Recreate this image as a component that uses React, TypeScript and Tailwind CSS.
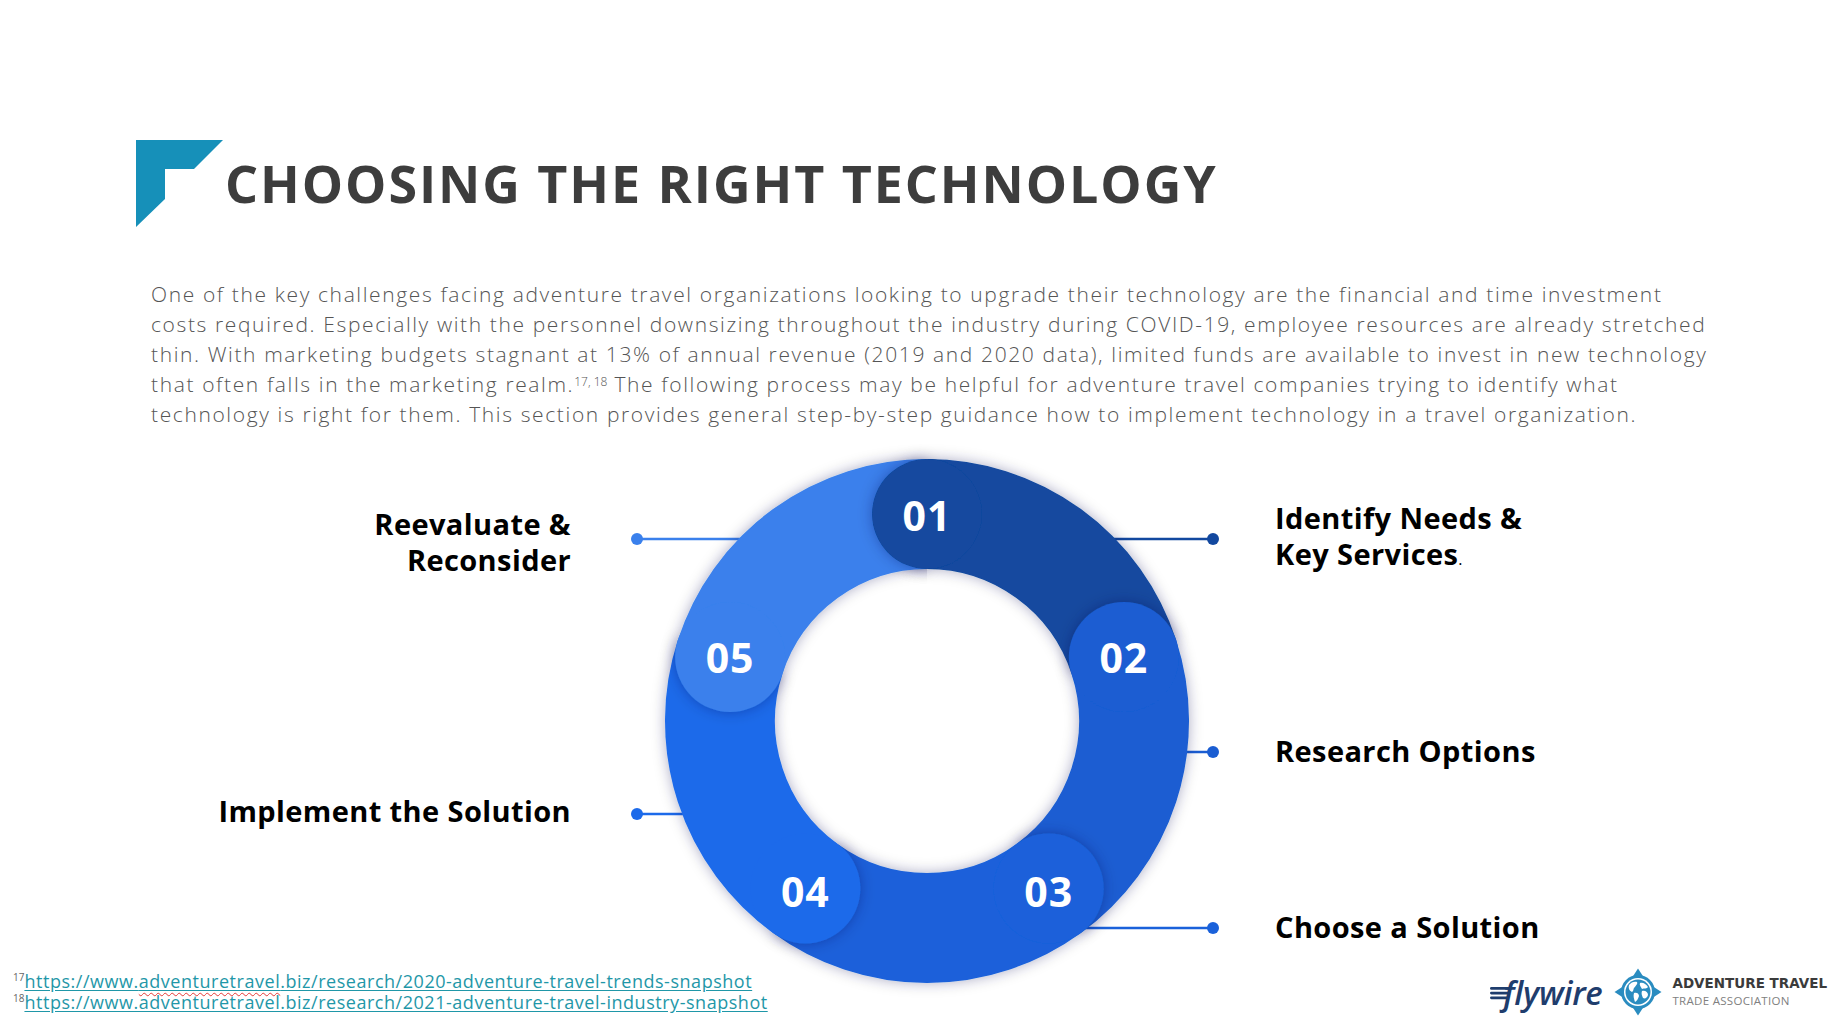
import React from "react";

const CX = 927;
const CY = 721;
const RM = 207;
const BW = 110;
const RO = RM + BW / 2;

const pt = (deg: number, r: number) => {
  const a = (deg * Math.PI) / 180;
  return [CX + r * Math.sin(a), CY - r * Math.cos(a)];
};

const arc = (a: number, b: number) => {
  const [x1, y1] = pt(a, RM);
  const [x2, y2] = pt(b, RM);
  return `M ${x1} ${y1} A ${RM} ${RM} 0 0 1 ${x2} ${y2}`;
};

const segments = [
  { n: "01", a: 0, color: "#12489f", dy: 17 },
  { n: "02", a: 72, color: "#1a5dd2", dy: 16 },
  { n: "03", a: 144, color: "#1a61da", dy: 19 },
  { n: "04", a: 216, color: "#1c6aea", dy: 19 },
  { n: "05", a: 288, color: "#3a80ec", dy: 16 },
];

const connectors = [
  { x1: 637, x2: 800, y: 539, color: "#3a80ec" },
  { x1: 637, x2: 760, y: 814, color: "#1c6aea" },
  { x1: 1050, x2: 1213, y: 539, color: "#12489f" },
  { x1: 1100, x2: 1213, y: 752, color: "#1a5dd2" },
  { x1: 980, x2: 1213, y: 928, color: "#1a61da" },
];

const FlagMark = () => (
  <svg width="87" height="87" viewBox="0 0 87 87" className="shrink-0">
    <polygon points="0,0 87,0 58,29 29,29 29,59 0,87" fill="#1690b9" />
  </svg>
);

const Ring = () => {
  const head = pt(0, RM);
  return (
    <svg width="630" height="540" viewBox="610 455 630 540" className="block ml-[610px] overflow-visible">
      <defs>
        <filter id="sh" filterUnits="userSpaceOnUse" x="580" y="420" width="720" height="620">
          <feDropShadow dx="0" dy="0" stdDeviation="7" floodColor="#0a1f4d" floodOpacity="0.33" />
        </filter>
        <clipPath id="headclip">
          <path d={`M ${CX} ${CY - RO} A ${RO} ${RO} 0 0 0 ${CX} ${CY + RO} Z`} />
          <circle cx={head[0]} cy={head[1]} r={BW / 2} />
        </clipPath>
      </defs>

      {connectors.map((c, i) => (
        <g key={i}>
          <line x1={c.x1} y1={c.y} x2={c.x2} y2={c.y} stroke={c.color} strokeWidth="2.5" />
          <circle cx={c.x1 < CX ? c.x1 : c.x2} cy={c.y} r="6" fill={c.color} />
        </g>
      ))}

      {segments.map((s) => {
        const [hx, hy] = pt(s.a, RM);
        return (
          <g key={s.n} filter="url(#sh)">
            <path d={arc(s.a, s.a + 72)} stroke={s.color} strokeWidth={BW} fill="none" />
            <circle cx={hx} cy={hy} r={BW / 2} fill={s.color} />
          </g>
        );
      })}

      <g clipPath="url(#headclip)">
        <g filter="url(#sh)">
          <circle cx={head[0]} cy={head[1]} r={BW / 2} fill="#12489f" />
        </g>
      </g>

      {segments.map((s) => {
        const [hx, hy] = pt(s.a, RM);
        return (
          <text
            key={s.n + "t"}
            x={hx}
            y={hy + s.dy}
            textAnchor="middle"
            fill="#ffffff"
            className="font-['Open_Sans',sans-serif] font-bold text-[41px] tracking-[1px]"
          >
            {s.n}
          </text>
        );
      })}
    </svg>
  );
};

const Globe = () => (
  <svg width="48" height="48" viewBox="0 0 48 48" className="shrink-0">
    <path d="M24 0.5 L29.5 9 L18.5 9 Z" fill="#2a8cc0" />
    <path d="M47.5 24 L39 29.5 L39 18.5 Z" fill="#2a8cc0" />
    <path d="M24 47.5 L18.5 39 L29.5 39 Z" fill="#2a8cc0" />
    <path d="M0.5 24 L9 18.5 L9 29.5 Z" fill="#2a8cc0" />
    <circle cx="24" cy="24" r="17" fill="#2a8cc0" />
    <circle cx="24" cy="24" r="14" fill="#ffffff" />
    <circle cx="24" cy="24" r="12.5" fill="#2a8cc0" />
    <path d="M15 17 C17 14 21 13 23 14 C24 16 22 17 21 19 C19 20 20 23 18 24 C16 23 14 21 15 17 Z" fill="#ffffff" />
    <path d="M20 25 C22 24 25 25 25 28 C24 31 23 33 21 34 C20 31 19 28 20 25 Z" fill="#ffffff" />
    <path d="M26 15 C29 14 32 16 34 19 C33 21 30 20 28 21 C27 19 25 17 26 15 Z" fill="#ffffff" />
    <path d="M28 23 C31 22 34 24 34 27 C33 30 31 31 29 30 C28 28 27 25 28 23 Z" fill="#ffffff" />
  </svg>
);

const Flywire = () => (
  <div className="flex items-center">
    <svg width="22" height="16" viewBox="0 0 22 16" className="shrink-0 mt-[2px]">
      <rect x="0" y="2" width="22" height="2.8" rx="1.4" fill="#1f3d6d" />
      <rect x="0" y="6.7" width="20" height="2.8" rx="1.4" fill="#1f3d6d" />
      <rect x="0" y="11.4" width="18" height="2.8" rx="1.4" fill="#1f3d6d" />
    </svg>
    <span className="-ml-[9px] font-['Open_Sans',sans-serif] italic font-semibold text-[33px] leading-none tracking-[-0.3px] text-[#1f3d6d]">
      flywire
    </span>
  </div>
);

export default function App() {
  return (
    <div className="w-[1846px] h-[1034px] bg-white flex flex-col overflow-hidden font-['Open_Sans',sans-serif]">
      <header className="flex items-start pl-[136px] pt-[140px]">
        <FlagMark />
        <h1 className="ml-[2px] mt-[17px] text-[52px] leading-[52px] font-bold tracking-[0.037em] text-[#3d3d3d] whitespace-nowrap">
          CHOOSING THE RIGHT TECHNOLOGY
        </h1>
      </header>

      <p className="mt-[52px] pl-[151px] text-[21px] leading-[30px] font-light tracking-[1.62px] text-[#555555] whitespace-nowrap">
        <span className="block">
          One of the key challenges facing adventure travel organizations looking to upgrade their technology are the financial and time investment
        </span>
        <span className="block">
          costs required. Especially with the personnel downsizing throughout the industry during COVID-19, employee resources are already stretched
        </span>
        <span className="block">
          thin. With marketing budgets stagnant at 13% of annual revenue (2019 and 2020 data), limited funds are available to invest in new technology
        </span>
        <span className="block">
          that often falls in the marketing realm.
          <sup className="text-[12px] tracking-normal">17, 18</sup> The following process may be helpful for adventure travel companies trying to identify what
        </span>
        <span className="block">
          technology is right for them. This section provides general step-by-step guidance how to implement technology in a travel organization.
        </span>
      </p>

      <div className="relative mt-[26px] h-[490px] w-full">
        <Ring />
        <div className="absolute left-[171px] top-[51px] w-[400px] text-right text-[29px] leading-[36px] font-bold tracking-[0.4px] text-black">
          Reevaluate &amp;
          <br />
          Reconsider
        </div>
        <div className="absolute left-[171px] top-[338px] w-[400px] text-right text-[29px] leading-[36px] font-bold tracking-[0.4px] text-black">
          Implement the Solution
        </div>
        <div className="absolute left-[1275px] top-[45px] text-[29px] leading-[36px] font-bold tracking-[0.4px] text-black">
          Identify Needs &amp;
          <br />
          Key Services<span className="font-normal text-[16px]">.</span>
        </div>
        <div className="absolute left-[1275px] top-[278px] text-[29px] leading-[36px] font-bold tracking-[0.4px] text-black">
          Research Options
        </div>
        <div className="absolute left-[1275px] top-[454px] text-[29px] leading-[36px] font-bold tracking-[0.4px] text-black">
          Choose a Solution
        </div>
      </div>

      <footer className="mt-auto flex items-end justify-between pb-[18px] pr-[19px]">
        <div className="mb-[3px] pl-[13px] text-[18px] leading-[21px] tracking-[0.53px]">
          <div className="flex items-start">
            <span className="text-[10px] leading-[12px] tracking-normal text-[#666666]">17</span>
            <a className="text-[#1f97a8] underline decoration-[#1f97a8] underline-offset-[2px]">
              https://www.
              <span className="underline decoration-wavy decoration-[#e53935] decoration-1 underline-offset-[4px]">adventuretravel</span>
              .biz/research/2020-adventure-travel-trends-snapshot
            </a>
          </div>
          <div className="flex items-start">
            <span className="text-[10px] leading-[12px] tracking-normal text-[#666666]">18</span>
            <a className="text-[#1f97a8] underline decoration-[#1f97a8] underline-offset-[2px]">
              https://www.adventuretravel.biz/research/2021-adventure-travel-industry-snapshot
            </a>
          </div>
        </div>

        <div className="flex items-center">
          <Flywire />
          <div className="ml-[12px]">
            <Globe />
          </div>
          <div className="ml-[10px] flex flex-col">
            <span className="font-['DejaVu_Sans',sans-serif] font-bold text-[13.5px] leading-[17px] text-[#3b3b3b]">
              ADVENTURE TRAVEL
            </span>
            <span className="text-[11.5px] leading-[17px] tracking-[0.3px] text-[#808080]">
              TRADE ASSOCIATION
            </span>
          </div>
        </div>
      </footer>
    </div>
  );
}
